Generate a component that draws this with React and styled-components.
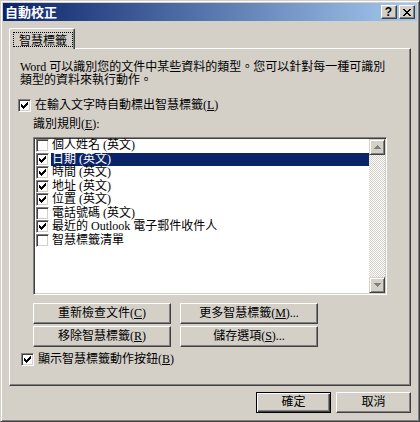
import React from 'react';
import styled, { createGlobalStyle } from 'styled-components';

const FACE = '#d4d0c8';

const Global = createGlobalStyle`
  html, body { margin: 0; padding: 0; background: ${FACE}; }
  body {
    font-family: "Liberation Serif", "Noto Sans CJK TC", serif;
    font-size: 12px;
    color: #000;
  }
  * { box-sizing: border-box; }
`;

const Window = styled.div`
  width: 420px;
  height: 422px;
  background: ${FACE};
  border: 1px solid;
  border-color: ${FACE} #404040 #404040 ${FACE};
  box-shadow: inset 1px 1px #fff, inset -1px -1px #808080;
  padding: 2px;
  display: flex;
  flex-direction: column;
`;

const TitleBar = styled.div`
  height: 18px;
  display: flex;
  align-items: center;
  padding: 0 2px 0 2px;
  background: linear-gradient(to right, #0a246a, #a6caf0);
`;

const TitleText = styled.div`
  font-family: "Noto Sans CJK TC", sans-serif;
  font-weight: 700;
  font-size: 13px;
  line-height: 18px;
  color: #fff;
  letter-spacing: 0px;
`;

const CaptionButtons = styled.div`
  margin-left: auto;
  display: flex;
  gap: 2px;
`;

const CaptionButton = styled.div`
  width: 16px;
  height: 14px;
  background: ${FACE};
  border: 1px solid;
  border-color: #fff #404040 #404040 #fff;
  box-shadow: inset -1px -1px #808080;
  display: flex;
  align-items: center;
  justify-content: center;
  font-family: "Liberation Sans", sans-serif;
  font-weight: 700;
  font-size: 12px;
  line-height: 12px;
  padding-right: 1px;
`;

const Body = styled.div`
  padding: 7px 6px 0 6px;
  display: flex;
  flex-direction: column;
`;

const TabStrip = styled.div`
  height: 20px;
  display: flex;
  align-items: flex-start;
`;

const Tab = styled.div`
  position: relative;
  z-index: 1;
  width: 66px;
  height: 21px;
  background: ${FACE};
  border-left: 1px solid #fff;
  border-top: 1px solid #fff;
  border-right: 1px solid #404040;
  border-radius: 2px 2px 0 0;
  box-shadow: inset -1px 0 #808080;
  padding: 3px 0 0 3px;
`;

const FocusRect = styled.div`
  width: 60px;
  height: 15px;
  border: 1px dotted #000;
  display: flex;
  align-items: center;
  justify-content: center;
  font-family: "Noto Sans CJK TC", sans-serif;
  font-size: 12px;
  line-height: 13px;
`;

const Panel = styled.div`
  height: 338px;
  border: 1px solid;
  border-color: #fff #404040 #404040 #fff;
  box-shadow: inset -1px -1px #808080;
  padding: 12px 8px 0 8px;
  display: flex;
  flex-direction: column;
`;

const Desc = styled.div`
  margin-left: 2px;
  line-height: 13px;
  white-space: nowrap;
`;

const CheckRow = styled.label`
  display: flex;
  align-items: center;
  gap: 4px;
  height: 13px;
  line-height: 13px;
  margin-top: ${p => p.$top || 0}px;
  margin-left: ${p => p.$left || 0}px;
  white-space: nowrap;
`;

const Box = styled.span`
  flex: none;
  width: 13px;
  height: 13px;
  background: #fff;
  border: 1px solid;
  border-color: #808080 #fff #fff #808080;
  box-shadow: inset 1px 1px #404040, inset -1px -1px ${FACE};
  display: flex;
  align-items: center;
  justify-content: center;
`;

const Label = styled.div`
  margin: 6px 0 0 15px;
  line-height: 13px;
`;

const ListBox = styled.div`
  margin: 6px 0 0 15px;
  width: 354px;
  height: 158px;
  background: #fff;
  border: 1px solid;
  border-color: #808080 #fff #fff #808080;
  box-shadow: inset 1px 1px #404040, inset -1px -1px ${FACE};
  padding: 1px;
  display: flex;
`;

const Items = styled.div`
  flex: 1;
  display: flex;
  flex-direction: column;
  padding-left: 1px;
`;

const Item = styled.div`
  height: 13.5px;
  display: flex;
  align-items: center;
  gap: 2px;
  white-space: nowrap;
`;

const ItemText = styled.span`
  flex: 1;
  height: 13.5px;
  line-height: 13.5px;
  padding-left: 1px;
  background: ${p => (p.$selected ? '#0a246a' : 'transparent')};
  color: ${p => (p.$selected ? '#fff' : '#000')};
`;

const ScrollBar = styled.div`
  width: 16px;
  display: flex;
  flex-direction: column;
`;

const ScrollButton = styled.div`
  width: 16px;
  height: 16px;
  background: ${FACE};
  border: 1px solid;
  border-color: ${FACE} #404040 #404040 ${FACE};
  box-shadow: inset 1px 1px #fff, inset -1px -1px #808080;
  display: flex;
  align-items: center;
  justify-content: center;
`;

const Track = styled.div`
  flex: 1;
  background: repeating-conic-gradient(#fff 0 25%, ${FACE} 0 50%) 0 0 / 2px 2px;
`;

const ButtonGrid = styled.div`
  margin: 8px 0 0 15px;
  display: grid;
  grid-template-columns: 138px 138px;
  column-gap: 9px;
  row-gap: 2px;
`;

const Button = styled.div`
  height: 21px;
  width: ${p => (p.$w ? `${p.$w}px` : 'auto')};
  background: ${FACE};
  border: 1px solid;
  border-color: ${p => (p.$default ? '#000' : '#fff #404040 #404040 #fff')};
  box-shadow: ${p =>
    p.$default
      ? `inset 1px 1px #fff, inset -1px -1px #404040, inset -2px -2px #808080`
      : `inset -1px -1px #808080`};
  display: flex;
  align-items: center;
  justify-content: center;
  line-height: 13px;
  white-space: nowrap;
`;

const Footer = styled.div`
  margin-top: 6px;
  display: flex;
  justify-content: flex-end;
  gap: 5px;
`;

const Check = () => (
  <svg width="7" height="7" viewBox="0 0 7 7" shapeRendering="crispEdges">
    <path
      fill="#000"
      d="M6 0h1v1h-1zM5 1h2v1h-2zM0 2h1v1h-1zM4 2h3v1h-3zM0 3h2v1h-2zM3 3h3v1h-3zM0 4h5v1h-5zM1 5h3v1h-3zM2 6h1v1h-1z"
    />
  </svg>
);

const CheckBox = ({ checked }) => <Box>{checked ? <Check /> : null}</Box>;

const Arrow = ({ down }) => (
  <svg
    width="7"
    height="4"
    viewBox="0 0 7 4"
    shapeRendering="crispEdges"
    style={down ? { transform: 'rotate(180deg)' } : undefined}
  >
    <path fill="#808080" d="M3 0h1v1h-1zM2 1h3v1h-3zM1 2h5v1h-5zM0 3h7v1h-7z" />
  </svg>
);

const CloseGlyph = () => (
  <svg width="8" height="7" viewBox="0 0 8 7" shapeRendering="crispEdges">
    <path
      fill="#000"
      d="M0 0h2v1h-2zM6 0h2v1h-2zM1 1h2v1h-2zM5 1h2v1h-2zM2 2h4v1h-4zM3 3h2v1h-2zM2 4h4v1h-4zM1 5h2v1h-2zM5 5h2v1h-2zM0 6h2v1h-2zM6 6h2v1h-2z"
    />
  </svg>
);

const rules = [
  { text: '個人姓名 (英文)', checked: false },
  { text: '日期 (英文)', checked: true, selected: true },
  { text: '時間 (英文)', checked: true },
  { text: '地址 (英文)', checked: true },
  { text: '位置 (英文)', checked: true },
  { text: '電話號碼 (英文)', checked: false },
  { text: '最近的 Outlook 電子郵件收件人', checked: true },
  { text: '智慧標籤清單', checked: false },
];

export default function App() {
  return (
    <>
      <Global />
      <Window>
        <TitleBar>
          <TitleText>自動校正</TitleText>
          <CaptionButtons>
            <CaptionButton>?</CaptionButton>
            <CaptionButton>
              <CloseGlyph />
            </CaptionButton>
          </CaptionButtons>
        </TitleBar>
        <Body>
          <TabStrip>
            <Tab>
              <FocusRect>智慧標籤</FocusRect>
            </Tab>
          </TabStrip>
          <Panel>
            <Desc>
              Word 可以識別您的文件中某些資料的類型。您可以針對每一種可識別
              <br />
              類型的資料來執行動作。
            </Desc>
            <CheckRow $top={12}>
              <CheckBox checked />
              <span>
                在輸入文字時自動標出智慧標籤(<u>L</u>)
              </span>
            </CheckRow>
            <Label>
              識別規則(<u>E</u>):
            </Label>
            <ListBox>
              <Items>
                {rules.map(r => (
                  <Item key={r.text}>
                    <CheckBox checked={r.checked} />
                    <ItemText $selected={r.selected}>{r.text}</ItemText>
                  </Item>
                ))}
              </Items>
              <ScrollBar>
                <ScrollButton>
                  <Arrow />
                </ScrollButton>
                <Track />
                <ScrollButton>
                  <Arrow down />
                </ScrollButton>
              </ScrollBar>
            </ListBox>
            <ButtonGrid>
              <Button>
                重新檢查文件(<u>C</u>)
              </Button>
              <Button>
                更多智慧標籤(<u>M</u>)...
              </Button>
              <Button>
                移除智慧標籤(<u>R</u>)
              </Button>
              <Button>
                儲存選項(<u>S</u>)...
              </Button>
            </ButtonGrid>
            <CheckRow $top={6} $left={3}>
              <CheckBox checked />
              <span>
                顯示智慧標籤動作按鈕(<u>B</u>)
              </span>
            </CheckRow>
          </Panel>
          <Footer>
            <Button $w={75} $default>
              確定
            </Button>
            <Button $w={75}>取消</Button>
          </Footer>
        </Body>
      </Window>
    </>
  );
}
